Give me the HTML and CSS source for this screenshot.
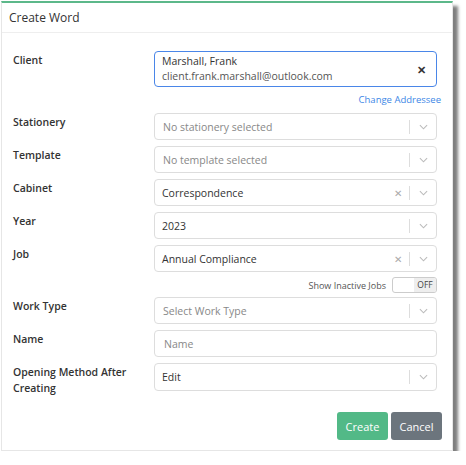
FILE: index.html
```html
<!DOCTYPE html>
<html lang="en">
<head>
  <meta charset="UTF-8" />
  <title>Create Word</title>
  <link rel="stylesheet" href="styles.css">
</head>
<body>

  <div class="modal">
    <div class="modal-header">Create Word</div>

    <div class="modal-body">
      <div class="row">
        <label class="field-label">Client</label>
        <div class="client-box">
          <div class="client-text">
            <div class="client-name">Marshall, Frank</div>
            <div class="client-email">client.frank.marshall@outlook.com</div>
          </div>
          <span class="client-clear">&#x2715;</span>
        </div>
      </div>
      <div class="link-row"><a href="#">Change Addressee</a></div>

      <div class="row">
        <label class="field-label">Stationery</label>
        <div class="select">
          <span class="placeholder">No stationery selected</span>
          <span class="sep"></span>
          <svg class="chevron" viewBox="0 0 10 6"><path d="M1 1l4 4 4-4" /></svg>
        </div>
      </div>

      <div class="row">
        <label class="field-label">Template</label>
        <div class="select">
          <span class="placeholder">No template selected</span>
          <span class="sep"></span>
          <svg class="chevron" viewBox="0 0 10 6"><path d="M1 1l4 4 4-4" /></svg>
        </div>
      </div>

      <div class="row">
        <label class="field-label">Cabinet</label>
        <div class="select">
          <span class="value">Correspondence</span>
          <span class="clear">&#x2715;</span>
          <span class="sep"></span>
          <svg class="chevron" viewBox="0 0 10 6"><path d="M1 1l4 4 4-4" /></svg>
        </div>
      </div>

      <div class="row">
        <label class="field-label">Year</label>
        <div class="select">
          <span class="value">2023</span>
          <span class="sep"></span>
          <svg class="chevron" viewBox="0 0 10 6"><path d="M1 1l4 4 4-4" /></svg>
        </div>
      </div>

      <div class="row">
        <label class="field-label">Job</label>
        <div class="select">
          <span class="value">Annual Compliance</span>
          <span class="clear">&#x2715;</span>
          <span class="sep"></span>
          <svg class="chevron" viewBox="0 0 10 6"><path d="M1 1l4 4 4-4" /></svg>
        </div>
      </div>
      <div class="toggle-row">
        <span>Show Inactive Jobs</span>
        <div class="toggle"><span class="toggle-off">OFF</span></div>
      </div>

      <div class="row">
        <label class="field-label">Work Type</label>
        <div class="select">
          <span class="placeholder">Select Work Type</span>
          <span class="sep"></span>
          <svg class="chevron" viewBox="0 0 10 6"><path d="M1 1l4 4 4-4" /></svg>
        </div>
      </div>

      <div class="row">
        <label class="field-label">Name</label>
        <input class="text-input" type="text" placeholder="Name">
      </div>

      <div class="row">
        <label class="field-label">Opening Method After Creating</label>
        <div class="select select-tall">
          <span class="value">Edit</span>
          <span class="sep"></span>
          <svg class="chevron" viewBox="0 0 10 6"><path d="M1 1l4 4 4-4" /></svg>
        </div>
      </div>
    </div>

    <div class="modal-footer">
      <button class="btn btn-create">Create</button>
      <button class="btn btn-cancel">Cancel</button>
    </div>
  </div>

</body>
</html>
```

FILE: styles.css
```css
* {
  box-sizing: border-box;
  margin: 0;
  padding: 0;
}

body {
  font-family: 'Open Sans', 'Noto Sans', sans-serif;
  font-size: 10.5px;
  color: #333;
  background: #fff;
}

.modal {
  width: 452px;
  height: 450px;
  margin: 1px 0 0 1px;
  background: #fff;
  border: 1px solid #e6e6e6;
  border-top: 2px solid #5cb88a;
  box-shadow: 5px 5px 3px rgba(0, 0, 0, 0.5);
  display: flex;
  flex-direction: column;
}

.modal-header {
  height: 30px;
  padding: 0 7px;
  font-size: 12px;
  line-height: 29px;
  color: #333;
  border-bottom: 1px solid #eee;
}

.modal-body {
  padding: 18px 15px 0 11px;
}

.row {
  display: grid;
  grid-template-columns: 141px 1fr;
  margin-bottom: 6px;
}

.field-label {
  font-weight: 600;
  color: #333;
  padding-top: 1px;
  line-height: 16px;
}

.client-box {
  height: 36px;
  border: 1.5px solid #4a86e8;
  border-radius: 4px;
  display: flex;
  align-items: center;
  padding: 0 10px 0 7px;
}

.client-text {
  flex: 1;
  line-height: 15px;
}

.client-name {
  color: #333;
}

.client-email {
  color: #555;
}

.client-clear {
  font-size: 11px;
  font-weight: bold;
  color: #333;
}

.link-row {
  text-align: right;
  margin: 3px -4px 6px 0;
  font-size: 9.5px;
  line-height: 14px;
}

.link-row a {
  color: #3d87e6;
  text-decoration: none;
}

.select {
  height: 27px;
  border: 1px solid #ddd;
  border-radius: 4px;
  display: flex;
  align-items: center;
  padding-left: 7px;
}

.select-tall {
  height: 28px;
}

.placeholder {
  flex: 1;
  color: #888;
  padding-left: 1px;
}

.value {
  flex: 1;
  color: #333;
}

.clear {
  color: #aaa;
  font-size: 10px;
  margin-right: 7px;
}

.sep {
  width: 1px;
  height: 14px;
  background: #ddd;
}

.chevron {
  width: 9px;
  height: 6px;
  margin: 0 8px 0 9px;
  fill: none;
  stroke: #bbb;
  stroke-width: 1.2;
}

.text-input {
  height: 27px;
  border: 1px solid #ddd;
  border-radius: 4px;
  padding-left: 9px;
  font-family: inherit;
  font-size: 10.5px;
  color: #333;
}

.text-input::placeholder {
  color: #888;
}

.toggle-row {
  display: flex;
  justify-content: flex-end;
  align-items: center;
  gap: 6px;
  margin: -1px 0 4px;
  font-size: 9px;
  color: #555;
}

.toggle {
  width: 45px;
  height: 16px;
  border: 1px solid #ccc;
  border-radius: 3px;
  display: flex;
  justify-content: flex-end;
  overflow: hidden;
}

.toggle-off {
  width: 22px;
  background: #eee;
  font-size: 8.5px;
  line-height: 14px;
  text-align: center;
  color: #444;
}

.modal-footer {
  margin-top: auto;
  display: flex;
  justify-content: flex-end;
  gap: 3px;
  padding: 0 10px 10px 0;
}

.btn {
  height: 28px;
  border: none;
  border-radius: 3px;
  color: #fff;
  font-family: inherit;
  font-size: 11px;
  cursor: pointer;
}

.btn-create {
  width: 51px;
  background: #52b987;
}

.btn-cancel {
  width: 51px;
  background: #6c757d;
}
```
